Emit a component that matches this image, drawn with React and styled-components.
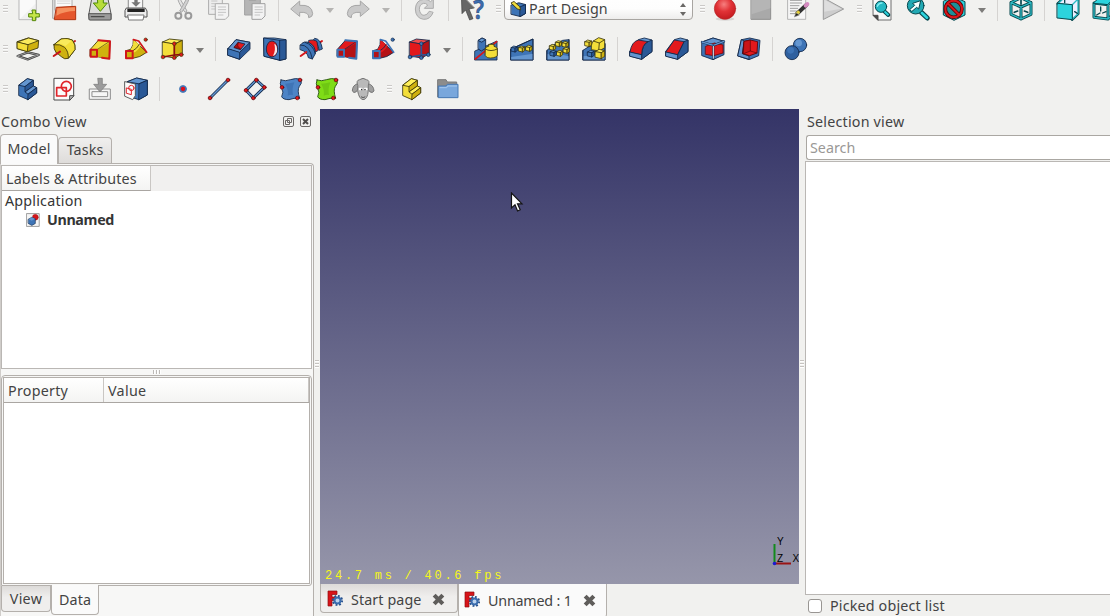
import React from "react";
import styled, { createGlobalStyle } from "styled-components";

const GlobalStyle = createGlobalStyle`
  * { box-sizing: border-box; }
  body {
    margin: 0;
    overflow: hidden;
    background: #f1f1ef;
    color: #434343;
    font-family: "Noto Sans", "Open Sans", sans-serif;
    font-size: 14.3px;
    line-height: 20px;
  }
`;

const Window = styled.div`
  width: 1110px;
  height: 616px;
  overflow: hidden;
  display: flex;
  flex-direction: column;
  background: #f1f1ef;
`;

const Label = styled.span`
  white-space: pre;
  letter-spacing: ${(p) => p.$track || 0}px;
  font-weight: ${(p) => (p.$bold ? 700 : 400)};
  color: ${(p) => p.$color || "inherit"};
`;

/* ---------- toolbars ---------- */

const Toolbars = styled.header`
  flex: none;
  height: 109px;
  margin-top: -11px;
  margin-bottom: 11px;
`;

const ToolRow = styled.div`
  display: flex;
  align-items: center;
  height: 40px;
  width: 1130px;
`;

const ToolButton = styled.button`
  flex: none;
  display: grid;
  place-items: center;
  width: 36px;
  height: 36px;
  padding: 0;
  border: 0;
  background: none;
  svg { display: block; width: 24px; height: 24px; overflow: visible; }
`;

const Separator = styled.i`
  flex: none;
  width: 1px;
  height: 24px;
  margin: 0 5px;
  background: #d5d3d1;
`;

const Grip = styled.i`
  flex: none;
  width: 5px;
  height: 9px;
  margin-left: ${(p) => (p.$first ? 3 : 6)}px;
  margin-right: 2px;
  background: repeating-linear-gradient(#cbc9c7 0 1px, #fbfbfb 1px 2px, transparent 2px 3px);
`;

const MenuArrow = styled.i`
  flex: none;
  width: 20px;
  display: grid;
  place-items: center;
  &::before {
    content: "";
    margin-top: 3px;
    border: 4px solid transparent;
    border-top: 5px solid ${(p) => (p.$off ? "#b5b4b2" : "#7d7c7a")};
    border-bottom: 0;
  }
`;

const WorkbenchSelect = styled.div`
  flex: none;
  display: flex;
  align-items: center;
  width: 189px;
  height: 28px;
  margin: 0 1px 6px;
  padding: 6px 6px 0 5px;
  border: 1px solid #a8a5a1;
  border-radius: 4px;
  background: linear-gradient(#ffffff, #fdfdfd 60%, #eeedec);
  gap: 3px;
  line-height: 16px;
  > svg { width: 16px; height: 16px; flex: none; }
  > ${Label} { flex: 1; }
`;

const Steppers = styled.span`
  display: flex;
  flex-direction: column;
  gap: 5px;
  margin: 1px 0 0 0;
  &::before, &::after { content: ""; border: 3px solid transparent; }
  &::before { border-bottom: 4px solid #6a6866; border-top: 0; }
  &::after { border-top: 4px solid #6a6866; border-bottom: 0; }
`;

/* ---------- docks ---------- */

const Body = styled.main`
  display: flex;
  height: 507px;
`;

const ComboDock = styled.section`
  width: 314px;
  display: flex;
  flex-direction: column;
`;

const DockTitle = styled.div`
  display: flex;
  align-items: center;
  gap: 6px;
  height: ${(p) => p.$h}px;
  padding: 0 3px 0 ${(p) => p.$left}px;
  > ${Label} { flex: 1; }
  svg { width: 11px; height: 11px; }
`;

const Tabs = styled.div`
  display: flex;
  align-items: ${(p) => (p.$below ? "flex-start" : "flex-end")};
  position: relative;
  z-index: 1;
  margin: ${(p) => (p.$overlap ? (p.$below ? "-1px 0 0" : "0 0 -1px") : 0)};
`;

const Tab = styled.div`
  display: flex;
  align-items: center;
  justify-content: center;
  width: ${(p) => p.$w}px;
  height: ${(p) => p.$h}px;
  margin: ${(p) => (p.$active ? 0 : p.$below ? "1px 0 0" : "0 0 1px")};
  padding-bottom: ${(p) => (p.$below ? 0 : 2)}px;
  border: 1px solid #b4b0ac;
  ${(p) => (p.$below ? "border-top" : "border-bottom")}: 0;
  border-radius: ${(p) => (p.$below ? "0 0 4px 4px" : "4px 4px 0 0")};
  background: ${(p) => (p.$active ? "#fafafa" : "linear-gradient(#f0efee, #dedcda)")};
  ${(p) => p.$below && !p.$active && "background: linear-gradient(#dddbd9, #efeeed 45%);"}
`;

const ComboPane = styled.div`
  height: 453px;
  display: flex;
  flex-direction: column;
  border: 1px solid #b4b0ac;
  border-left-color: #d0cdca;
  border-bottom: 0;
  border-radius: 0 4px 0 0;
  background: #f7f7f6;
  padding: 1px 1px 0 0;
`;

const Tree = styled.div`
  height: 204px;
  border: 1px solid #bab7b4;
  background: #fff;
`;

const HeaderRow = styled.div`
  display: flex;
  height: ${(p) => p.$h}px;
  background: ${(p) => (p.$plain ? "#f1f0ef" : "linear-gradient(#ffffff, #f2f1f0)")};
  border-bottom: ${(p) => (p.$plain ? "0" : "1px solid #aaa6a2")};
`;

const HeaderCell = styled.div`
  width: ${(p) => p.$w}px;
  padding: 3px 0 0 4px;
  border-right: 1px solid #c9c6c3;
  border-bottom: ${(p) => (p.$line ? "1px solid #aaa6a2" : "0")};
  background: linear-gradient(#ffffff, #f4f4f3);
  line-height: 19px;
`;

const TreeItem = styled.div`
  display: flex;
  align-items: center;
  gap: 7px;
  height: 19px;
  padding-left: ${(p) => p.$indent}px;
  color: #353535;
  svg { width: 14px; height: 14px; }
`;

const RowHandle = styled.i`
  width: 8px;
  height: 4px;
  margin: 1px 0 1px 152px;
  background: repeating-linear-gradient(90deg, #bdbab7 0 1px, #fff 1px 2px, transparent 2px 3px);
`;

const PropertyFrame = styled.div`
  height: 211px;
  width: 311px;
  padding: 1px;
  border: 1px solid #b4b0ac;
  border-radius: 4px 4px 3px 0;
`;

const PropertyTable = styled.div`
  height: 207px;
  border: 1px solid #b4b0ac;
  background: #fff;
`;

const ColumnHandle = styled.div`
  width: 6px;
  display: flex;
  align-items: center;
  justify-content: center;
  padding-top: 2px;
  &::before {
    content: "";
    width: 4px;
    height: 8px;
    background: repeating-linear-gradient(#c6c3c0 0 1px, #fff 1px 2px, transparent 2px 3px);
  }
`;

const Center = styled.section`
  width: 479px;
`;

const Viewport = styled.div`
  position: relative;
  height: 475px;
  background: linear-gradient(#343467, #9696aa);
`;

const FrameRate = styled.div`
  position: absolute;
  left: 5px;
  bottom: 0;
  height: 16px;
  line-height: 16px;
  white-space: pre;
  color: #f6f61a;
  font-family: "Liberation Mono", monospace;
  font-size: 12px;
  letter-spacing: 2.75px;
`;

const Pointer = styled.svg`
  position: absolute;
  left: 190px;
  top: 83px;
  width: 14px;
  height: 21px;
`;

const AxisCross = styled.svg`
  position: absolute;
  right: 0;
  bottom: 16px;
  width: 30px;
  height: 32px;
  font: 10px "Liberation Sans", sans-serif;
`;

const DocTab = styled(Tab)`
  justify-content: flex-start;
  margin: 0;
  padding: ${(p) => (p.$active ? "0 0 0 5px" : "3px 0 0 6px")};
  > svg:first-child { width: 16px; height: 17px; margin: -2px 8px 0 0; }
  > svg:last-child { width: 13px; height: 13px; margin-left: ${(p) => p.$gap}px; }
`;

const SelectionDock = styled.section`
  width: 305px;
  display: flex;
  flex-direction: column;
`;

const SearchField = styled.div`
  height: 25px;
  margin-left: 1px;
  padding: 2px 3px;
  border: 1px solid #aaa7a2;
  border-right: 0;
  border-radius: 3px 0 0 3px;
  background: #fff;
`;

const SelectionList = styled.div`
  height: 434px;
  margin-top: 1px;
  border: 1px solid #bab7b4;
  border-right: 0;
  background: #fff;
`;

const CheckRow = styled.label`
  display: flex;
  align-items: center;
  gap: 8px;
  height: 21px;
  padding-left: 3px;
`;

const CheckBox = styled.i`
  width: 14px;
  height: 14px;
  border: 1px solid #989592;
  border-radius: 3px;
  background: #fff;
`;

/* ---------- icons (72 unit grid) ---------- */

const BLUE = "#3e74b6";
const LIGHT = "#6496d0";
const DEEP = "#2a5896";
const NAVY = "#12294a";
const RED = "#e3191c";
const YEL = "#f3de3a";
const GOLD = "#cfb10f";
const OLIVE = "#3f390c";
const CYAN = "#2cd3dd";
const TEAL = "#06474d";

const Svg = ({ children, sw = 2.6, ink = NAVY }) => (
  <svg viewBox="0 0 72 72" fill="none" stroke={ink} strokeWidth={sw} strokeLinejoin="round" strokeLinecap="round">
    {children}
  </svg>
);
const P = ({ d, f = "none", s, w }) => <path d={d} fill={f} stroke={s} strokeWidth={w} />;
const Dot = ({ x, y, r = 5.5, f = RED, s = "#5c0508" }) => <circle cx={x} cy={y} r={r} fill={f} stroke={s} strokeWidth="2" />;

const MiniCube = ({ x, y, r = 8, blue }) => (
  <g transform={`translate(${x} ${y}) scale(${r / 10})`} stroke={blue ? NAVY : OLIVE} strokeWidth={24 / r}>
    <path d="M-10 -5L-2 -10L10 -7L3 -3Z" fill={blue ? LIGHT : "#fff05a"} />
    <path d="M-10 -5L3 -3V10L-10 7Z" fill={blue ? BLUE : YEL} />
    <path d="M3 -3L10 -7V5L3 10Z" fill={blue ? DEEP : GOLD} />
  </g>
);

const icons = {
  newDoc: (
    <Svg ink="#a2a2a2" sw={2}>
      <P d="M10 -6H61V68H10Z" f="#f0f0f0" />
      <P d="M12 66L58 20V-4H12Z" f="#fafafa" s="none" />
      <P d="M49 39h10v11h11v10H59v11H49V60H38V50h11Z" f="#c6e64b" s="#55880d" w="3" />
    </Svg>
  ),
  open: (
    <Svg ink="#8d8d8d" sw={2}>
      <P d="M3 -4H56V64H3Z" f="#dedede" />
      <P d="M10 4H60V40H10Z" f="#fafafa" />
      <P d="M16 12H54M16 19H54" s="#c4c4c4" />
      <P d="M14 31L71 28L71 68H8Z" f="#e5562c" s="#b03410" w="3" />
      <P d="M16 34L69 31V42Q40 42 13 56Z" f="#f5915f" s="none" />
    </Svg>
  ),
  save: (
    <Svg ink="#555" sw={3}>
      <P d="M14 -4H58L69 50V68H3V50Z" f="#dcdcdc" />
      <P d="M3 50H69V66Q69 69 66 69H6Q3 69 3 66Z" f="#9b9b9b" />
      <P d="M10 59H48" s="#4a4a4a" w="4" />
      <P d="M28 -6H46V18H58L37 43L16 18H28Z" f="#b8dd3c" s="#4f8a0b" />
    </Svg>
  ),
  print: (
    <Svg ink="#555" sw={3}>
      <P d="M14 -4H56V36H14Z" f="#f7f7f7" s="#8a8a8a" />
      <P d="M31 -4H41V16H50L36 29L22 16H31Z" f="#777" s="none" />
      <P d="M8 33H64L69 42V60H3V42Z" f="#ededed" />
      <P d="M10 35H62V45H10Z" f="#242424" s="none" />
      <P d="M12 54H60L57 69H15Z" f="#fff" s="#777" />
    </Svg>
  ),
  cut: (
    <Svg ink="#a9a9a9" sw={3}>
      <P d="M18 -6Q18 14 42 46L48 42L24 0Z" f="#e3e3e3" />
      <P d="M56 -6Q56 14 32 46L26 42L50 0Z" f="#d2d2d2" />
      <circle cx="22" cy="56" r="9" stroke="#9a9a9a" strokeWidth="6" />
      <circle cx="52" cy="56" r="9" stroke="#9a9a9a" strokeWidth="6" />
    </Svg>
  ),
  copy: (
    <Svg ink="#adadad" sw={3}>
      <P d="M6 -2H46V52H6Z" f="#ededed" />
      <P d="M14 12H30M14 20H24M14 28H24M14 36H24" s="#c5c5c5" />
      <P d="M26 20H65V57L55 67H26Z" f="#f3f3f3" />
      <P d="M34 30H56M34 38H56M34 46H56M34 54H48" s="#c5c5c5" />
    </Svg>
  ),
  paste: (
    <Svg ink="#a0a0a0" sw={3}>
      <P d="M6 -4H52V54H6Z" f="#b5b5b5" />
      <P d="M20 -4H38V10H20Z" f="#dadada" />
      <P d="M28 20H66V57L56 67H28Z" f="#f3f3f3" />
      <P d="M36 30H58M36 38H58M36 46H58M36 54H50" s="#c5c5c5" />
    </Svg>
  ),
  undo: (
    <Svg ink="#a6a6a6" sw={3}>
      <P d="M3 35L29 12V25Q66 22 68 50Q68 60 56 62Q58 44 29 46V57Z" f="#c9c9c9" />
    </Svg>
  ),
  redo: (
    <Svg ink="#a6a6a6" sw={3}>
      <P d="M69 35L43 12V25Q6 22 4 50Q4 60 16 62Q14 44 43 46V57Z" f="#c9c9c9" />
    </Svg>
  ),
  refresh: (
    <Svg ink="#ababab" sw={3}>
      <P d="M60 47Q52 68 32 67Q8 64 7 36Q9 8 34 7Q46 7 53 14L61 6V34H34L44 24Q38 18 32 19Q19 22 19 37Q21 54 33 55Q44 54 48 44Z" f="#cfcfcf" />
    </Svg>
  ),
  help: (
    <Svg ink="#3e3e3e" sw={2}>
      <P d="M4 -6L6 50L17 39L29 69L39 65L27 36L42 33Z" f="#666" />
      <text x="40" y="66" fill="#3c6cae" stroke="#1d3f73" strokeWidth="1.5" fontFamily="Noto Sans" fontWeight="600" fontSize="80" textLength="32" lengthAdjust="spacingAndGlyphs">?</text>
    </Svg>
  ),
  record: (
    <Svg ink="#b32a2a" sw={2}>
      <defs>
        <radialGradient id="rec" cx="45%" cy="30%" r="75%">
          <stop offset="0" stopColor="#f77f7f" />
          <stop offset=".45" stopColor="#e13236" />
          <stop offset="1" stopColor="#c0171c" />
        </radialGradient>
      </defs>
      <ellipse cx="36" cy="66" rx="28" ry="5" fill="#d8d6d4" stroke="none" />
      <circle cx="36" cy="35" r="32" fill="url(#rec)" />
    </Svg>
  ),
  stop: (
    <Svg ink="#8f8f8f" sw={3}>
      <P d="M7 5H65V67H7Z" f="#a9a9a9" />
      <P d="M8 6H64V34L8 52Z" f="#b5b5b5" s="none" />
    </Svg>
  ),
  edit: (
    <Svg ink="#999" sw={2}>
      <P d="M9 -2H62V67H9Z" f="#f6f6f6" />
      <P d="M16 10H50M16 18H50M16 26H42M16 34H38M16 42H34M16 50H30" s="#9e9e9e" w="3" />
      <P d="M64 24L36 50" s="#333" w="12" />
      <P d="M67 21L62 26" s="#d58ac0" w="12" />
      <P d="M40 46L36 50" s="#e5cf3a" w="10" />
      <P d="M33 48L28 60L42 54Z" f="#222" />
    </Svg>
  ),
  play: (
    <Svg ink="#9a9a9a" sw={3}>
      <P d="M8 3L68 36L8 67Z" f="#cdcdcd" />
      <P d="M10 8L60 35L10 44Z" f="#dedede" s="none" />
    </Svg>
  ),
  fitAll: (
    <Svg ink={TEAL} sw={3}>
      <P d="M10 -4H63V69H24L10 55Z" f="#f8f8f8" s="#6f6f6f" />
      <P d="M10 55H24V69Z" f="#4a4a4a" s="#4a4a4a" />
      <P d="M42 42L55 54" s={TEAL} w="12" />
      <P d="M43 43L54 53" s={CYAN} w="6" />
      <circle cx="33" cy="29" r="17" fill="#25b9c4" />
      <P d="M22 28Q26 18 36 18" s="#86eef3" w="4" />
    </Svg>
  ),
  fitSelection: (
    <Svg ink={TEAL} sw={3}>
      <P d="M46 46L64 63" s={TEAL} w="15" />
      <P d="M47 47L63 62" s={CYAN} w="8" />
      <circle cx="29" cy="26" r="25" fill="#22a9b4" />
      <P d="M12 37L26 25L20 19L44 11L38 36L32 31L18 43Z" f="#f6ffff" />
    </Svg>
  ),
  drawStyle: (
    <Svg ink={TEAL} sw={3}>
      <P d="M36 0L69 14V54L36 70L4 54V14Z" f={CYAN} />
      <P d="M36 8L60 20V50L36 62L11 50V20Z" f="#1d8f98" />
      <circle cx="35" cy="36" r="25" stroke="#5c0508" strokeWidth="11" />
      <P d="M18 20L52 54" s="#5c0508" w="11" />
      <circle cx="35" cy="36" r="25" stroke="#d9161b" strokeWidth="6" />
      <P d="M18 20L52 54" s="#d9161b" w="6" />
    </Svg>
  ),
  isoView: (
    <Svg ink={TEAL} sw={3}>
      <P d="M36 2L66 17V52L36 66L6 52V17ZM6 17L36 30L66 17M36 30V66" s={TEAL} w="9" />
      <P d="M36 2L66 17V52L36 66L6 52V17ZM6 17L36 30L66 17M36 30V66" s="#2db9c3" w="4" />
      <P d="M36 10V22M16 46L26 42M56 46L46 42" s={TEAL} w="5" />
    </Svg>
  ),
  frontView: (
    <Svg ink={TEAL} sw={3}>
      <P d="M6 20L24 3L66 6L48 24ZM48 24L66 6V50L48 67Z" s={TEAL} w="9" />
      <P d="M6 20L24 3L66 6L48 24ZM48 24L66 6V50L48 67Z" f="#eef" s="#2db9c3" w="4" />
      <P d="M4 19L49 23V68L4 63Z" f={CYAN} />
      <P d="M26 2V17M56 44L64 49" w="4" />
    </Svg>
  ),
  topView: (
    <Svg ink={TEAL} sw={3}>
      <P d="M6 18L48 23V66L6 61ZM48 23L66 6V50L48 66" s={TEAL} w="9" />
      <P d="M6 18L48 23V66L6 61ZM48 23L66 6V50L48 66" s="#2db9c3" w="4" />
      <P d="M4 18L22 2H68L48 22Z" f={CYAN} />
      <P d="M26 30V42M14 54L24 48M32 48L42 44" w="4" />
    </Svg>
  ),

  pad: (
    <Svg ink={OLIVE}>
      <P d="M5 57L36 46L68 54L35 67Z" s="#3c3c3c" w="7" />
      <P d="M5 57L36 46L68 54L35 67Z" s="#c9c9c9" w="2" />
      <P d="M4 15L4 35L34 44L66 33L68 11L38 3Z" f={GOLD} />
      <P d="M4 15L38 3L68 11L36 23Z" f="#f9ea5c" />
      <P d="M4 15L36 23L34 44L4 35Z" f={YEL} />
    </Svg>
  ),
  revolve: (
    <Svg ink={OLIVE}>
      <P d="M60 18L69 12" s="#c5161a" w="6" />
      <P d="M6 23L27 6Q47 2 61 9Q72 24 69 38L49 64Q38 69 28 59Q20 52 13 48Q4 36 6 23Z" f={GOLD} />
      <P d="M6 23L27 6Q47 2 61 9Q72 24 69 38L49 64Q50 44 38 31Q24 20 6 23Z" f={YEL} />
      <P d="M12 20L29 8Q46 5 58 12L40 27Q28 18 12 20Z" f="#f9ea5c" s="none" />
      <P d="M5 57L24 44" s="#c5161a" w="6" />
    </Svg>
  ),
  groove: (
    <Svg>
      <P d="M58 20L69 12" s="#d5161a" w="6" />
      <P d="M48 4Q66 6 70 36L60 40Q58 18 44 10Z" f={BLUE} />
      <P d="M30 10Q46 6 54 14L58 40L44 48Q42 24 28 18Z" f={RED} />
      <P d="M4 24Q14 10 30 17Q50 26 49 50L40 66L28 62Q26 44 4 38Z" f={BLUE} />
      <P d="M4 24Q32 22 40 66M18 16Q42 22 49 50" />
      <P d="M5 57L22 45" s="#d5161a" w="6" />
    </Svg>
  ),
  pocket: (
    <Svg>
      <P d="M3 35L27 8L69 16V37L38 67L3 55Z" f={DEEP} />
      <P d="M3 35L27 8L69 16L38 46Z" f={LIGHT} />
      <P d="M3 35L38 46V67L3 55Z" f={BLUE} />
      <P d="M22 31L34 16L54 21L41 37Z" f={RED} />
      <P d="M34 16L32 27L41 37L22 31Z" f="#a80e12" s="#5c0508" w="2" />
    </Svg>
  ),
  hole: (
    <Svg>
      <P d="M3 3H34L69 8V66L51 70L4 58Z" f={LIGHT} />
      <P d="M3 3L51 10V70L4 58Z" f={BLUE} />
      <P d="M51 10L69 8V66L51 70Z" f={DEEP} />
      <ellipse cx="27" cy="36" rx="17" ry="24" fill={RED} />
      <P d="M34 20Q44 24 42 44Q38 55 30 56Q39 40 34 20Z" f="#f4e9ea" s="none" />
    </Svg>
  ),
  mirror: (
    <Svg>
      <P d="M3 42L69 12V69H3Z" f={BLUE} />
      <P d="M4 66L68 14" s="#d5161a" w="5" />
      <P d="M13 10L24 3L35 8V34L22 42L13 36Z" f={BLUE} />
      <P d="M13 10L24 3L35 8L24 15Z" f={LIGHT} />
      <P d="M34 34Q36 28 44 28V22H60V28Q70 30 70 36V56Q60 66 40 62L34 56Z" f={YEL} s={OLIVE} />
      <P d="M34 36Q50 46 70 36" s={OLIVE} />
    </Svg>
  ),
  linear: (
    <Svg>
      <P d="M3 36L69 6V69H3Z" f={BLUE} />
      <P d="M3 60L69 50V69H3Z" f={LIGHT} s="none" />
      <P d="M3 36L69 6V69H3Z" />
      <MiniCube x={13} y={36} r={9} blue />
      <MiniCube x={35} y={36} r={9} />
      <MiniCube x={57} y={34} r={9} />
    </Svg>
  ),
  polar: (
    <Svg>
      <P d="M3 40L22 24L50 10L69 8V69H3Z" f={BLUE} />
      <P d="M3 52Q30 46 69 58V69H3Z" f={LIGHT} s="none" />
      <P d="M3 40V69H69V8" />
      <MiniCube x={20} y={31} r={9} />
      <MiniCube x={38} y={20} r={9} />
      <MiniCube x={58} y={22} r={9} />
      <MiniCube x={61} y={40} r={9} />
      <MiniCube x={41} y={49} r={9} />
      <MiniCube x={22} y={49} r={9} blue />
    </Svg>
  ),
  multi: (
    <Svg>
      <P d="M3 40L22 28L69 20V69H3Z" f={BLUE} />
      <P d="M3 58L69 50V69H3Z" f={LIGHT} s="none" />
      <P d="M3 40V69H69V20" />
      <g stroke={OLIVE}>
        <P d="M34 12L50 2L68 8V32L52 42L28 38V24Z" f={YEL} />
        <P d="M34 12L52 18L68 8M52 18L50 40" />
      </g>
      <MiniCube x={19} y={19} r={10} />
      <MiniCube x={27} y={50} r={10} blue />
      <MiniCube x={54} y={51} r={14} />
    </Svg>
  ),
  fillet: (
    <Svg>
      <P d="M3 42L28 8L46 3L69 9V44L38 67L3 57Z" f={LIGHT} />
      <P d="M38 53Q40 22 57 14L69 9V44L38 67Z" f={DEEP} />
      <P d="M3 44L38 52V67L3 58Z" f={LIGHT} />
      <P d="M3 44Q8 14 28 9L57 14Q39 22 38 52Z" f={RED} />
    </Svg>
  ),
  chamfer: (
    <Svg>
      <P d="M3 42L28 8L46 3L69 9V44L38 67L3 57Z" f={LIGHT} />
      <P d="M38 53L57 14L69 9V44L38 67Z" f={DEEP} />
      <P d="M3 44L38 52V67L3 58Z" f={LIGHT} />
      <P d="M3 44L28 9L57 14L38 52Z" f={RED} />
    </Svg>
  ),
  draft: (
    <Svg>
      <P d="M3 15L36 3L69 13V53L36 68L3 56Z" f={BLUE} />
      <P d="M3 15L36 3L69 13L37 25Z" f={LIGHT} />
      <P d="M14 28L40 18L66 24V48L38 56L14 52Z" f={RED} s="#7a0a0d" />
      <P d="M3 15L37 25L69 13" s={NAVY} w="7" />
      <P d="M3 15L37 25L69 13" s={LIGHT} w="4" />
      <P d="M37 28V66" s={NAVY} w="6" />
      <P d="M37 28V64" s="#dfe8f5" w="3" />
    </Svg>
  ),
  thickness: (
    <Svg>
      <P d="M14 8L38 3L69 10L65 56L36 68L3 57Z" f={BLUE} />
      <P d="M14 8L22 12L16 50L36 57V67L3 57Z" f={LIGHT} />
      <P d="M22 13L40 9L62 14L60 48L38 56L18 50Z" f={RED} s="#5c0508" />
      <P d="M22 13L40 9V42L20 50Z" f="#c91418" s="#5c0508" w="2" />
      <P d="M40 42L60 48" s="#5c0508" w="2" />
    </Svg>
  ),
  boolean: (
    <Svg>
      <circle cx="48" cy="24" r="20" fill={BLUE} />
      <circle cx="44" cy="18" r="10" fill={LIGHT} stroke="none" />
      <circle cx="24" cy="47" r="21" fill="#2f609f" />
      <circle cx="20" cy="40" r="10" fill={BLUE} stroke="none" />
    </Svg>
  ),

  sketch: (
    <Svg ink="#4a4a4a" sw={3}>
      <P d="M7 4H65V56L53 69H7Z" f="#fbfbfb" />
      <P d="M65 56H53V69Z" f="#bbb" />
      <circle cx="43" cy="28" r="15" stroke="#e0242a" strokeWidth="5" />
      <P d="M14 32H43V57H14Z" s="#e0242a" w="5" />
    </Svg>
  ),
  mapSketch: (
    <Svg ink="#8d8d8d" sw={3}>
      <P d="M5 36H67V67H5Z" f="#f6f6f6" />
      <P d="M13 44H59V59H13Z" />
      <P d="M30 4H43V22H56L36 45L17 22H30Z" f="#9b9b9b" s="#777" w="2" />
    </Svg>
  ),
  sketchFace: (
    <Svg>
      <P d="M10 14L38 3L70 10V54L44 68L20 60Z" f={BLUE} />
      <P d="M10 14L38 3L70 10L46 20Z" f={LIGHT} />
      <P d="M46 20L70 10V54L45 68Z" f={DEEP} />
      <P d="M3 14L34 21V56L26 68L3 58Z" f="#fbfbfb" s="#4a4a4a" />
      <circle cx="22" cy="33" r="8" stroke="#e0242a" strokeWidth="3" />
      <P d="M8 33L22 37V53L8 49Z" s="#e0242a" w="3" />
    </Svg>
  ),
  point: (
    <Svg>
      <circle cx="36" cy="36" r="10.5" fill={BLUE} stroke="#4d7dba" />
      <circle cx="36" cy="36" r="6.5" fill="#e0101a" stroke="none" />
    </Svg>
  ),
  line: (
    <Svg>
      <P d="M9 63L63 9" w="9" />
      <P d="M9 63L63 9" s={LIGHT} w="4" />
      <Dot x={9} y={63} />
      <Dot x={63} y={9} />
    </Svg>
  ),
  polyline: (
    <Svg>
      <P d="M9 40L40 9L64 31L31 63Z" w="9" />
      <P d="M9 40L40 9L64 31L31 63Z" s={LIGHT} w="4" />
      <Dot x={9} y={40} />
      <Dot x={40} y={9} />
      <Dot x={64} y={31} />
      <Dot x={31} y={63} />
    </Svg>
  ),
  sheep: (
    <Svg ink="#777" sw={3}>
      <P d="M20 20Q4 24 4 42Q8 50 16 44L22 34ZM52 20Q68 24 69 42Q64 50 56 44L50 34Z" f="#a0a0a0" />
      <P d="M20 24Q14 10 26 8Q36 0 46 8Q58 10 52 24L52 40Q50 68 36 68Q24 66 20 42Z" f="#b9b9b9" />
      <P d="M27 36H31M42 36H46" s="#fff" w="8" />
      <P d="M32 37V38M42 37V38" s="#222" w="4" />
      <P d="M31 60Q36 64 42 60" s="#555" />
    </Svg>
  ),
  folder: (
    <Svg ink="#7a7a7a" sw={3}>
      <P d="M6 8H30L34 15H62V60H6Z" f="#8c8c8c" />
      <P d="M8 27H30L34 22H66V62H8Z" f="#79a7dc" s="#4678b4" />
      <P d="M12 32H32L36 27H62" s="#a6c8ee" />
    </Svg>
  ),
  document: (
    <Svg ink="#9a9a9a" sw={5}>
      <P d="M4 3H68V69H4Z" f="#f4f4f4" />
      <circle cx="48" cy="22" r="15" fill="#d3151b" stroke="#a01216" strokeWidth="2" />
      <P d="M12 32L30 22L48 30V54L30 64L12 54Z" f={BLUE} s={NAVY} w="3" />
      <P d="M14 32L30 40L46 30L30 22Z" f={LIGHT} s="none" />
    </Svg>
  ),
  workbench: (
    <Svg ink={NAVY} sw={4}>
      <P d="M6 18L40 8L70 16V56L46 70L6 60Z" f={BLUE} />
      <P d="M46 26L70 16V56L46 70Z" f={DEEP} />
      <P d="M6 8L18 2L44 26L48 40L34 36Z" f={YEL} s={OLIVE} />
    </Svg>
  ),
};

const scheme = (red) =>
  red
    ? { face: RED, side: "#b51216", top: "#f14b4d", edge: BLUE, ink: NAVY, dot: BLUE }
    : { face: YEL, side: GOLD, top: "#fff05a", edge: "#cf161b", ink: OLIVE, dot: RED };

const Loft = ({ red }) => {
  const c = scheme(red);
  return (
    <Svg ink={c.ink}>
      <P d="M7 37L31 10L66 13L64 65L27 59L7 58Z" f={c.face} />
      <P d="M27 38L64 18V65L27 59Z" f={c.side} s="none" />
      <P d="M27 38L62 15" w="2" />
      <P d="M31 10L66 13L64 65L42 62" s={c.edge} w="6" />
      <P d="M8 38H27V59H8Z" f={c.side} s={c.edge} w="6" />
    </Svg>
  );
};

const Pipe = ({ red }) => {
  const c = scheme(red);
  return (
    <Svg ink={c.ink}>
      <P d="M6 41L20 37Q30 24 28 8L68 46Q48 62 26 64L6 62Z" f={c.side} />
      <P d="M20 37Q30 24 28 8L50 26Q42 42 26 48Z" f={c.face} s="none" />
      <P d="M26 42Q40 34 46 22" />
      <P d="M28 8L44 12L68 46" s={c.edge} w="5" />
      <P d="M6 42H26V64H6Z" f={c.side} s={c.edge} w="6" />
      <Dot x={65} y={8} r={5} f={c.dot} s={c.ink} />
    </Svg>
  );
};

const Primitive = ({ red }) => {
  const c = scheme(red);
  return (
    <Svg ink={c.ink}>
      <P d="M8 15L28 6L67 10L44 21Z" f={c.top} />
      <P d="M8 15L44 21V63L8 57Z" f={c.face} />
      <P d="M44 21L67 10V50L44 63Z" f={c.side} />
      <P d="M43 20V54L9 60M43 54L64 53" s={red ? DEEP : "#8d0c10"} w="5" />
      <Dot x={43} y={20} f={c.dot} s={c.ink} />
      <Dot x={43} y={62} f={c.dot} s={c.ink} />
      <Dot x={9} y={60} f={c.dot} s={c.ink} />
      <Dot x={64} y={53} f={c.dot} s={c.ink} />
    </Svg>
  );
};

const Step = ({ yellow }) => {
  const [top, face, side, ink] = yellow ? ["#fff05a", YEL, GOLD, OLIVE] : [LIGHT, BLUE, DEEP, NAVY];
  return (
    <Svg ink={ink}>
      <P d="M9 24L34 5L52 10V27L62 32V48L36 68L9 56Z" f={face} />
      <P d="M9 24L34 5L52 10L28 28Z" f={top} />
      <P d="M28 28L52 10V27L28 44Z" f={side} />
      <P d="M28 44L52 27L62 32L37 51Z" f={top} />
      <P d="M37 51L62 32V48L36 68Z" f={side} />
    </Svg>
  );
};

const Surface = ({ green }) => (
  <Svg ink={green ? "#1d4a05" : NAVY}>
    <P
      d="M6 9Q20 14 34 8Q50 2 66 7Q70 20 61 28Q54 40 62 64Q44 62 30 68Q12 68 8 59Q16 46 7 31Q1 20 6 9Z"
      f={green ? "#7fdc17" : "#4d84c6"}
    />
    <P d="M18 20Q32 20 46 16Q38 36 42 54Q34 52 26 56Q30 40 18 20Z" f={green ? "#6fc713" : "#3f74b6"} s="none" />
    <Dot x={63} y={9} />
    <Dot x={9} y={31} />
    <Dot x={55} y={63} />
  </Svg>
);

const Tool = ({ name, children }) => <ToolButton aria-label={name}>{children || icons[name]}</ToolButton>;
const tools = (...names) => names.map((n) => <Tool key={n} name={n} />);

const FloatIcon = () => (
  <svg viewBox="0 0 11 11" fill="none" stroke="#6b6866">
    <rect x=".5" y=".5" width="10" height="10" rx="1.5" />
    <path d="M4.5 2.5h4v4h-4zM2.5 4.5h4v4h-4z" fill="#f2f1f0" />
  </svg>
);
const CloseIcon = () => (
  <svg viewBox="0 0 11 11" fill="none" stroke="#6b6866">
    <rect x=".5" y=".5" width="10" height="10" rx="1.5" />
    <path d="M3 3L8 8M8 3L3 8" strokeWidth="2" stroke="#4f4d4b" />
  </svg>
);
const AppIcon = () => (
  <svg viewBox="0 0 16 17">
    <path d="M1 1H10V4.5H5V7H9V10.5H5V16H1Z" fill="#d8141a" stroke="#8c0c10" strokeWidth=".7" />
    <circle cx="10.5" cy="10.5" r="4.6" fill="none" stroke="#28508c" strokeWidth="2" strokeDasharray="1.8 1.8" />
    <circle cx="10.5" cy="10.5" r="3" fill="#bcd3ee" stroke="#3a6cae" strokeWidth="2" />
  </svg>
);
const CrossIcon = () => (
  <svg viewBox="0 0 12 12">
    <path d="M2 2L10 10M10 2L2 10" stroke="#5f5d5b" strokeWidth="3.8" />
  </svg>
);

export default function App() {
  return (
    <Window>
      <GlobalStyle />
      <Toolbars>
        <ToolRow>
          <Grip $first />
          {tools("newDoc", "open", "save", "print")}
          <Separator />
          {tools("cut", "copy", "paste")}
          <Separator />
          {tools("undo")}
          <MenuArrow $off />
          {tools("redo")}
          <MenuArrow $off />
          <Separator />
          {tools("refresh")}
          <Separator />
          {tools("help")}
          <Grip />
          <WorkbenchSelect>
            {icons.workbench}
            <Label $track={0.05}>Part Design</Label>
            <Steppers />
          </WorkbenchSelect>
          <Grip />
          {tools("record", "stop", "edit", "play")}
          <Grip />
          {tools("fitAll", "fitSelection", "drawStyle")}
          <MenuArrow />
          <Separator />
          {tools("isoView")}
          <Separator />
          {tools("frontView", "topView")}
        </ToolRow>
        <ToolRow>
          <Grip $first />
          {tools("pad", "revolve")}
          <Tool name="loft"><Loft /></Tool>
          <Tool name="pipe"><Pipe /></Tool>
          <Tool name="primitive"><Primitive /></Tool>
          <MenuArrow />
          <Separator />
          {tools("pocket", "hole", "groove")}
          <Tool name="cut loft"><Loft red /></Tool>
          <Tool name="cut pipe"><Pipe red /></Tool>
          <Tool name="cut primitive"><Primitive red /></Tool>
          <MenuArrow />
          <Separator />
          {tools("mirror", "linear", "polar", "multi")}
          <Separator />
          {tools("fillet", "chamfer", "draft", "thickness")}
          <Separator />
          {tools("boolean")}
        </ToolRow>
        <ToolRow>
          <Grip $first />
          <Tool name="body"><Step /></Tool>
          {tools("sketch", "mapSketch", "sketchFace")}
          <Separator />
          {tools("point", "line", "polyline")}
          <Tool name="shape binder"><Surface /></Tool>
          <Tool name="sub shape binder"><Surface green /></Tool>
          {tools("sheep")}
          <Grip />
          <Tool name="part"><Step yellow /></Tool>
          {tools("folder")}
        </ToolRow>
      </Toolbars>

      <Body>
        <ComboDock>
          <DockTitle $h={25} $left={1}>
            <Label $track={0.22}>Combo View</Label>
            <FloatIcon />
            <CloseIcon />
          </DockTitle>
          <Tabs $overlap>
            <Tab $w={58} $h={30} $active><Label $track={0.2}>Model</Label></Tab>
            <Tab $w={54} $h={26}><Label $track={0.1}>Tasks</Label></Tab>
          </Tabs>
          <ComboPane>
            <Tree>
              <HeaderRow $h={25} $plain>
                <HeaderCell $w={149} $line><Label $track={0.17}>Labels &amp; Attributes</Label></HeaderCell>
              </HeaderRow>
              <TreeItem $indent={3}><Label $track={0.2}>Application</Label></TreeItem>
              <TreeItem $indent={24}>
                {icons.document}
                <Label $bold $track={-0.35}>Unnamed</Label>
              </TreeItem>
            </Tree>
            <RowHandle />
            <PropertyFrame>
              <PropertyTable>
                <HeaderRow $h={25}>
                  <HeaderCell $w={100}><Label $track={0.25}>Property</Label></HeaderCell>
                  <HeaderCell $w={205}><Label $track={0.3}>Value</Label></HeaderCell>
                </HeaderRow>
              </PropertyTable>
            </PropertyFrame>
            <Tabs $below $overlap>
              <Tab $below $w={50} $h={26}><Label $track={0.25}>View</Label></Tab>
              <Tab $below $w={48} $h={30} $active><Label $track={0.1}>Data</Label></Tab>
            </Tabs>
          </ComboPane>
        </ComboDock>

        <ColumnHandle />

        <Center>
          <Viewport>
            <Pointer viewBox="0 0 14 21">
              <path d="M1.5 1V16L5 12.8L7.6 19L10.2 17.8L7.5 11.8H12Z" fill="#fff" stroke="#141414" strokeWidth="1.2" />
            </Pointer>
            <FrameRate>24.7 ms / 40.6 fps</FrameRate>
            <AxisCross viewBox="0 0 30 32">
              <path d="M5.5 26V8" stroke="#138a1c" strokeWidth="2" />
              <path d="M6 27.5H22" stroke="#9a1414" strokeWidth="2" />
              <circle cx="5.5" cy="27.5" r="1.8" fill="#1b1bd0" />
              <text x="8" y="9">Y</text>
              <text x="8" y="26">Z</text>
              <text x="23.5" y="26">X</text>
            </AxisCross>
          </Viewport>
          <Tabs $below>
            <DocTab $below $w={138} $h={29} $gap={11}>
              <AppIcon /><Label $track={0.1}>Start page</Label><CrossIcon />
            </DocTab>
            <DocTab $below $w={149} $h={34} $gap={11} $active>
              <AppIcon /><Label $track={-0.2}>Unnamed : 1</Label><CrossIcon />
            </DocTab>
          </Tabs>
        </Center>

        <ColumnHandle />

        <SelectionDock>
          <DockTitle $h={26} $left={2}><Label $track={0.2}>Selection view</Label></DockTitle>
          <SearchField><Label $color="#9a9896">Search</Label></SearchField>
          <SelectionList />
          <CheckRow><CheckBox /><Label $track={0.17}>Picked object list</Label></CheckRow>
        </SelectionDock>
      </Body>
    </Window>
  );
}
